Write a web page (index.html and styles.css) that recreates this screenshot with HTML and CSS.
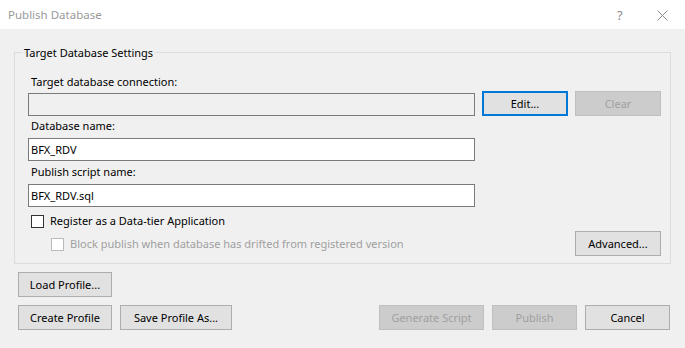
FILE: index.html
```html
<!DOCTYPE html>
<html>
<head>
<meta charset="utf-8">
<title>Publish Database</title>
<link rel="stylesheet" href="styles.css">
</head>
<body>
<div class="window">
  <div class="titlebar">
    <span class="title">Publish Database</span>
    <span class="help">?</span>
    <svg class="close" width="11" height="11" viewBox="0 0 11 11"><path d="M0.5 0.5 L10.5 10.5 M10.5 0.5 L0.5 10.5" stroke="#8a8a8a" stroke-width="1" fill="none"/></svg>
  </div>
  <div class="body">
    <div class="group">
      <span class="legend">Target Database Settings</span>
      <div class="label first">Target database connection:</div>
      <div class="row conn">
        <div class="input readonly"></div>
        <button class="btn focused w86">Edit...</button>
        <button class="btn disabled w86">Clear</button>
      </div>
      <div class="label">Database name:</div>
      <div class="input">BFX_RDV</div>
      <div class="label l3">Publish script name:</div>
      <div class="input">BFX_RDV.sql</div>
      <div class="check c1"><span class="box"></span><span>Register as a Data-tier Application</span></div>
      <div class="row lastrow">
        <div class="check c2 disabledtext"><span class="box dis"></span><span>Block publish when database has drifted from registered version</span></div>
        <button class="btn w86">Advanced...</button>
      </div>
    </div>
    <div class="bottom">
      <button class="btn w94">Load Profile...</button>
      <div class="row actions">
        <button class="btn w94">Create Profile</button>
        <button class="btn w112">Save Profile As...</button>
        <span class="spacer"></span>
        <button class="btn disabled w105">Generate Script</button>
        <button class="btn disabled w85">Publish</button>
        <button class="btn w85">Cancel</button>
      </div>
    </div>
  </div>
</div>
</body>
</html>
```
FILE: styles.css
```css
* { box-sizing: border-box; }
html, body { margin: 0; padding: 0; }
body {
  width: 685px;
  height: 348px;
  overflow: hidden;
  background: #f0f0f0;
  font-family: "Noto Sans", "Open Sans", sans-serif;
  font-size: 11px;
  color: #000;
}
.window { width: 685px; height: 348px; }
.titlebar {
  height: 29px;
  background: #fff;
  display: flex;
  align-items: center;
  padding-left: 8px;
  position: relative;
}
.title { color: #999; font-size: 11.5px; flex: 1; }
.help { color: #8a8a8a; font-size: 13px; width: 40px; }
.close { margin-right: 17px; margin-top: 1px; }
.body { padding: 23px 0 0 14px; }
.group {
  position: relative;
  width: 657px;
  height: 212px;
  border: 1px solid #dcdcdc;
  padding: 0 9px 0 13px;
}
.legend {
  position: absolute;
  left: 7px;
  top: -8px;
  background: #f0f0f0;
  padding: 0 2px 0 2px;
  line-height: 16px;
}
.label { line-height: 16px; padding-left: 3px; margin-top: 2px; height: 16px; }
.label.first { margin-top: 21px; }
.label.l3 { margin-top: 3px; }
.row { display: flex; align-items: flex-start; }
.conn { margin-top: 1px; gap: 7px; }
.input {
  width: 447px;
  height: 23px;
  border: 1px solid #7a7a7a;
  background: #fff;
  line-height: 21px;
  padding-left: 2px;
  margin-top: 4px;
}
.conn .input { margin-top: 2px; }
.input.readonly { background: #f0f0f0; }
.btn {
  height: 25px;
  border: 1px solid #adadad;
  background: #e1e1e1;
  font-family: inherit;
  font-size: 11px;
  color: #000;
  padding: 0;
  margin: 0;
}
.btn.focused { border: 2px solid #0078d7; }
.btn.disabled { background: #cccccc; border-color: #bfbfbf; color: #a0a0a0; }
.w86 { width: 86px; }
.w94 { width: 94px; }
.w112 { width: 112px; }
.w105 { width: 105px; }
.w85 { width: 85px; }
.check { display: flex; align-items: center; line-height: 16px; }
.check .box {
  width: 13px;
  height: 13px;
  border: 1px solid #333;
  background: #fff;
  margin-right: 6px;
}
.check .box.dis { border-color: #bcbcbc; }
.c1 { margin-top: 6px; padding-left: 3px; }
.lastrow { margin-top: 2px; justify-content: space-between; }
.c2 { margin-top: 5px; padding-left: 23px; }
.disabledtext { color: #a0a0a0; }
.bottom { padding: 8px 0 0 4px; }
.actions { margin-top: 8px; gap: 8px; width: 652px; }
.actions .spacer { flex: 1; }
```
